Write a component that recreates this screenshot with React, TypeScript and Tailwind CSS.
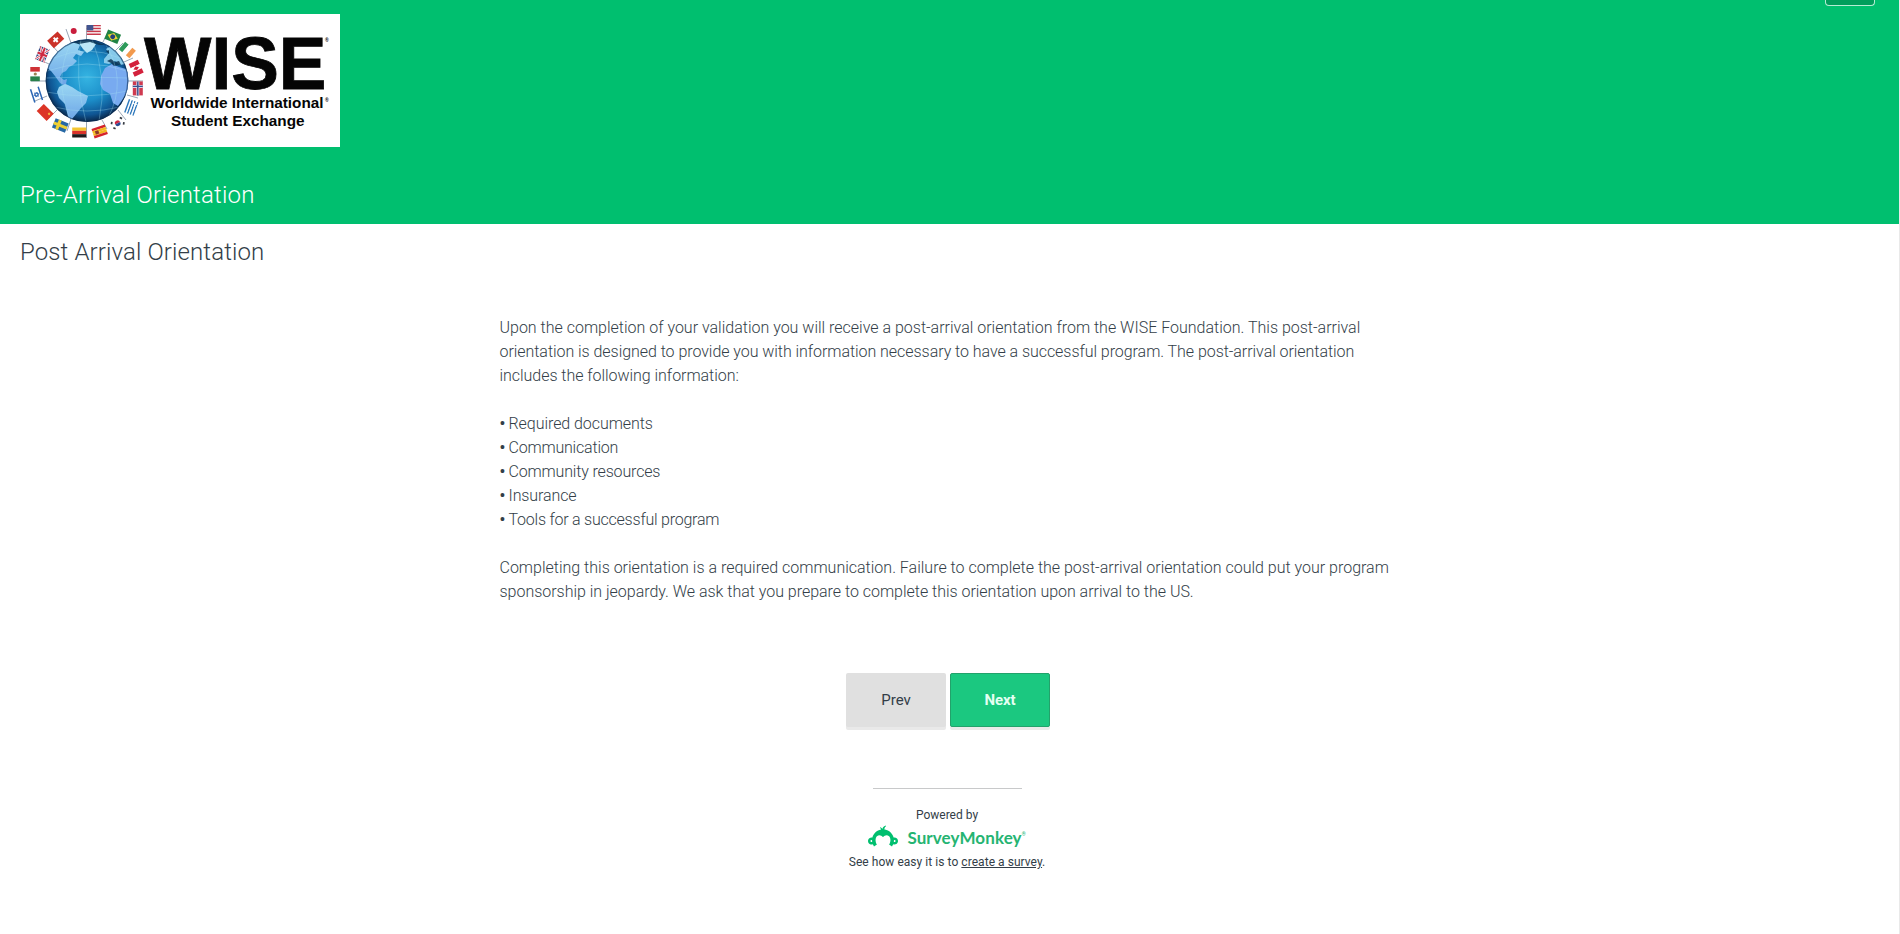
import type { ReactNode } from "react";
import { SiSurveymonkey } from "react-icons/si";

function Flag({ x, y, r = 0, children }: { x: number; y: number; r?: number; children: ReactNode }) {
  return <g transform={`translate(${x} ${y}) rotate(${r})`}>{children}</g>;
}

function Bands({ c, vertical = false }: { c: string[]; vertical?: boolean }) {
  return (
    <>
      {c.map((fill, i) =>
        vertical ? (
          <rect key={i} x={-7 + (i * 14) / c.length} y={-5} width={14 / c.length} height={10} fill={fill} />
        ) : (
          <rect key={i} x={-7} y={-5 + (i * 10) / c.length} width={14} height={10 / c.length} fill={fill} />
        ),
      )}
    </>
  );
}

function Cross({ bg, outer, inner }: { bg: string; outer: string; inner: string }) {
  return (
    <>
      <rect x="-7" y="-5" width="14" height="10" fill={bg} />
      <path d="M-7 0H7M-2 -5V5" stroke={outer} strokeWidth="3" />
      <path d="M-7 0H7M-2 -5V5" stroke={inner} strokeWidth="1.4" />
    </>
  );
}

function WiseLogo() {
  return (
    <svg viewBox="20 14 320 133" className="block h-[133px] w-[320px] bg-white">
      <defs>
        <radialGradient id="sea" cx="0.5" cy="0.46" r="0.55">
          <stop offset="0" stopColor="#35b4e2" />
          <stop offset="0.5" stopColor="#1c8fca" />
          <stop offset="0.82" stopColor="#0f5593" />
          <stop offset="1" stopColor="#08213f" />
        </radialGradient>
        <linearGradient id="land" x1="0" y1="0" x2="0" y2="1">
          <stop offset="0" stopColor="#9ad7f3" />
          <stop offset="1" stopColor="#6aa2e6" />
        </linearGradient>
        <clipPath id="disc"><circle cx="87" cy="80.7" r="41.4" /></clipPath>
      </defs>

      <g stroke="#6f7f95" strokeWidth="0.7">
        <path d="M86.5 40V25.5M103 42L108 32M115 51L123 43M124 62L133 58M128 81H143M127 95L138 98M118 110L126 120M102 120L107 129M86.5 122V138M71 119L67 131M57 110L47 120M47 96L35 101M46 81H31M49 64L38 59M58 52L49 42M71 43L66 29" />
      </g>

      <circle cx="87" cy="80.7" r="41.4" fill="url(#sea)" />
      <g clipPath="url(#disc)">
        <path d="M46 67C50 56 58 48 68 44L75 42L80 45L78 50L84 52L81 56L76 54L73 58L77 61L73 65L69 67L66 71L62 73L60 77L64 80L67 79L66 84L70 86L67 87L60 83L55 76L51 71Z" fill="url(#land)" />
        <path d="M78 42L89 40L96 44L92 50L87 53L83 49Z" fill="#bce7f7" />
        <path d="M59 87L65 84L72 87L78 91L88 96L86 103L81 108L77 113L72 119L69 122L67 112L65 104L59 98L57 92Z" fill="url(#land)" />
        <path d="M105 68L112 64L119 67L126 69L130 77L128 90L123 99L118 106L113 103L110 94L103 90L100 84L101 76Z" fill="#78aaf0" />
        <path d="M104 59L109 53L106 49L111 46L119 54L125 64L120 65L115 61L109 64L104 63Z" fill="#86c9ea" />
        <path d="M70 42L89 39L105 45L99 45L90 42L79 44ZM107 61L111 59L115 62L119 61L121 65L114 66L111 63ZM106 51L109 50L109 54Z" fill="#0c3554" opacity="0.85" />
        <path d="M47 71Q87 57 127 71M45 78Q87 76 129 78M46 92Q87 100 128 91M54 107Q87 115 120 107M54 58Q87 44 120 58M81 39Q74 78 86 122M92 39Q108 78 99 121M71 43Q53 78 70 119M105 43Q128 80 108 118" fill="none" stroke="#a8e2f4" strokeWidth="0.5" opacity="0.65" />
        <circle cx="87" cy="80.7" r="40.8" fill="none" stroke="#0b2c52" strokeWidth="1.2" opacity="0.6" />
      </g>

      <Flag x={93.8} y={30}>
        <Bands c={["#c8384a", "#f1dadd", "#c8384a", "#f1dadd", "#c8384a", "#f1dadd", "#c8384a"]} />
        <rect x="-7" y="-5" width="6.5" height="5.4" fill="#41558f" />
      </Flag>
      <Flag x={112.7} y={36.7} r={22}>
        <rect x="-7" y="-5" width="14" height="10" fill="#218343" />
        <path d="M-5.5 0L0 -4L5.5 0L0 4Z" fill="#ecd437" />
        <circle r="2.4" fill="#24407c" />
      </Flag>
      <Flag x={127.3} y={50} r={40}><Bands vertical c={["#2e9a5b", "#fff", "#f29a4e"]} /></Flag>
      <Flag x={136.2} y={68.3} r={65}>
        <Bands vertical c={["#d3213c", "#fff", "#d3213c"]} />
        <path d="M-2 0L0 -3L2 0L0 3Z" fill="#d3213c" />
      </Flag>
      <Flag x={137.8} y={88.4} r={90}><Cross bg="#cf3a50" outer="#dcd6e4" inner="#39508f" /></Flag>
      <Flag x={131.2} y={107.4} r={110}>
        <Bands c={["#2e78bb", "#fff", "#2e78bb", "#fff", "#2e78bb", "#fff", "#2e78bb"]} />
        <path d="M-7 -2.5H-1M-4.5 -5V0" stroke="#fff" strokeWidth="1" />
      </Flag>
      <Flag x={117.7} y={123.2} r={-28}>
        <path d="M-2.8 0A2.8 2.8 0 0 1 2.8 0Z" fill="#cf2742" />
        <path d="M-2.8 0A2.8 2.8 0 0 0 2.8 0Z" fill="#2b4a92" />
        <path d="M-6 -2L-4.5 -4M6 -2L4.5 -4M-6 2L-4.5 4M6 2L4.5 4" stroke="#353a42" strokeWidth="1.7" />
      </Flag>
      <Flag x={99.7} y={131.5} r={-18}>
        <Bands c={["#d5232b", "#f3b71f", "#f3b71f", "#d5232b"]} />
        <rect x="-4.5" y="-1.7" width="3.5" height="3.4" fill="#8d382c" />
      </Flag>
      <Flag x={79.2} y={132.5}><Bands c={["#f4c531", "#d9322b", "#1d1a1b"]} /></Flag>
      <Flag x={60.3} y={125.5} r={22}><Cross bg="#2769a5" outer="#edcf35" inner="#edcf35" /></Flag>
      <Flag x={45.2} y={112.4} r={45}>
        <rect x="-7" y="-5" width="14" height="10" fill="#dc3526" />
        <circle cx="3.8" cy="-1.7" r="1.2" fill="#f2b13b" />
      </Flag>
      <Flag x={36.5} y={94.6} r={72}>
        <path d="M-7 -4H7M-7 4H7" stroke="#2b66b4" strokeWidth="1.5" />
        <path d="M-2.2 1.3L0 -2.5L2.2 1.3ZM-2.2 -1.3L0 2.5L2.2 -1.3Z" fill="none" stroke="#2b66b4" strokeWidth="0.8" />
      </Flag>
      <g transform="translate(35.3 74)">
        <rect x="-5" y="-7" width="9.5" height="4.6" fill="#cf3236" />
        <rect x="-5" y="2.4" width="9.5" height="4.8" fill="#29804b" />
        <circle r="1.6" fill="#9a8352" />
      </g>
      <Flag x={42.3} y={54.4} r={-68}>
        <rect x="-7" y="-5" width="14" height="10" fill="#33447f" />
        <path d="M-7 -5L7 5M7 -5L-7 5" stroke="#fff" strokeWidth="2.2" />
        <path d="M-7 0H7M0 -5V5" stroke="#fff" strokeWidth="3.6" />
        <path d="M-7 -5L7 5M7 -5L-7 5" stroke="#ce3550" strokeWidth="0.8" />
        <path d="M-7 0H7M0 -5V5" stroke="#ce2940" strokeWidth="2" />
      </Flag>
      <Flag x={55.7} y={39.8} r={-42}>
        <rect x="-7" y="-5" width="14" height="10" fill="#cb3229" />
        <path d="M-3 0H3M0 -3V3" stroke="#fff" strokeWidth="2" />
      </Flag>
      <circle cx="73.7" cy="31" r="3" fill="#c91d3c" />

      <g fontFamily='"Liberation Sans", Arial, sans-serif' fontWeight="700" fill="#050505">
        <text x="144" y="88.7" fontSize="75" textLength="182.5" lengthAdjust="spacingAndGlyphs" stroke="#050505" strokeWidth="0.8">WISE</text>
        <text x="150.5" y="107.5" fontSize="14.6" textLength="173" lengthAdjust="spacingAndGlyphs">Worldwide International</text>
        <text x="171" y="126" fontSize="14.6" textLength="133.5" lengthAdjust="spacingAndGlyphs">Student Exchange</text>
        <text x="325" y="41.5" fontSize="5">®</text>
        <text x="325" y="101.5" fontSize="5">®</text>
      </g>
    </svg>
  );
}

function Item({ children }: { children: ReactNode }) {
  return (
    <li className="flex gap-[3px]">
      <span className="w-1.5 font-bold">•</span>
      {children}
    </li>
  );
}

export default function App() {
  return (
    <div className="flex h-[934px] w-full overflow-hidden bg-white font-['Roboto',sans-serif] font-light text-[#333e48]">
      <div className="flex min-w-0 flex-1 flex-col">
        <header className="flex h-56 justify-between bg-[#00bf6f] pl-5">
          <div className="flex flex-col pt-3.5">
            <WiseLogo />
            <h1 className="mt-8 whitespace-nowrap text-2xl tracking-[0.22px] text-white">Pre-Arrival Orientation</h1>
          </div>
          <div className="mr-6 h-1.5 w-[50px] rounded-b-[4px] border border-t-0 border-[#b5ecd3] bg-[#009e5c]" />
        </header>

        <h2 className="mt-3 whitespace-nowrap pl-5 text-2xl tracking-[0.12px]">Post Arrival Orientation</h2>

        <main className="mt-[48px] w-[900px] self-center pr-1">
          <div className="-mr-4 whitespace-nowrap text-base">
            <p>Upon the completion of your validation you will receive a post-arrival orientation from the WISE Foundation. This post-arrival</p>
            <p className="tracking-[-0.05px]">orientation is designed to provide you with information necessary to have a successful program. The post-arrival orientation</p>
            <p className="tracking-[-0.04px]">includes the following information:</p>
            <ul className="my-6">
              <Item><span className="tracking-[-0.06px]">Required documents</span></Item>
              <Item><span className="tracking-[-0.2px]">Communication</span></Item>
              <Item><span className="tracking-[-0.16px]">Community resources</span></Item>
              <Item><span className="tracking-[-0.1px]">Insurance</span></Item>
              <Item><span className="tracking-[-0.23px]">Tools for a successful program</span></Item>
            </ul>
            <p>Completing this orientation is a required communication. Failure to complete the post-arrival orientation could put your program</p>
            <p className="tracking-[-0.02px]">sponsorship in jeopardy. We ask that you prepare to complete this orientation upon arrival to the US.</p>
          </div>
        </main>

        <div className="mt-[69px] flex justify-center gap-1 pr-[3px]">
          <button className="h-[54px] w-[100px] rounded-xs bg-[#e0e0e0] text-[15px] font-normal shadow-[0_3px_0_#e9e9e9]">Prev</button>
          <button className="h-[54px] w-[100px] rounded-xs border border-[#22a26b] bg-[#1bc880] text-[15px] font-bold tracking-[-0.1px] text-[#e3fff2] shadow-[0_3px_0_#e8ece9]">Next</button>
        </div>

        <footer className="mt-[61px] flex flex-col items-center pr-[5px] text-xs font-normal">
          <div className="h-px w-[149px] bg-[#c8c9ca]" />
          <p className="mt-[18px]">Powered by</p>
          <div className="flex h-[30px] items-center">
            <SiSurveymonkey className="-mt-1 size-[30px] text-[#00bf6f]" />
            <span className="ml-[9px] whitespace-nowrap font-['Lato',sans-serif] text-[17px] font-bold tracking-[0.1px] text-[#25b472]">SurveyMonkey</span>
            <span className="-mt-2 text-[5px] text-[#25b472]">®</span>
          </div>
          <p className="mt-px tracking-[0.05px]">See how easy it is to <a className="underline">create a survey</a>.</p>
        </footer>
      </div>
      <div className="w-px bg-[#e9e9e9]" />
    </div>
  );
}
